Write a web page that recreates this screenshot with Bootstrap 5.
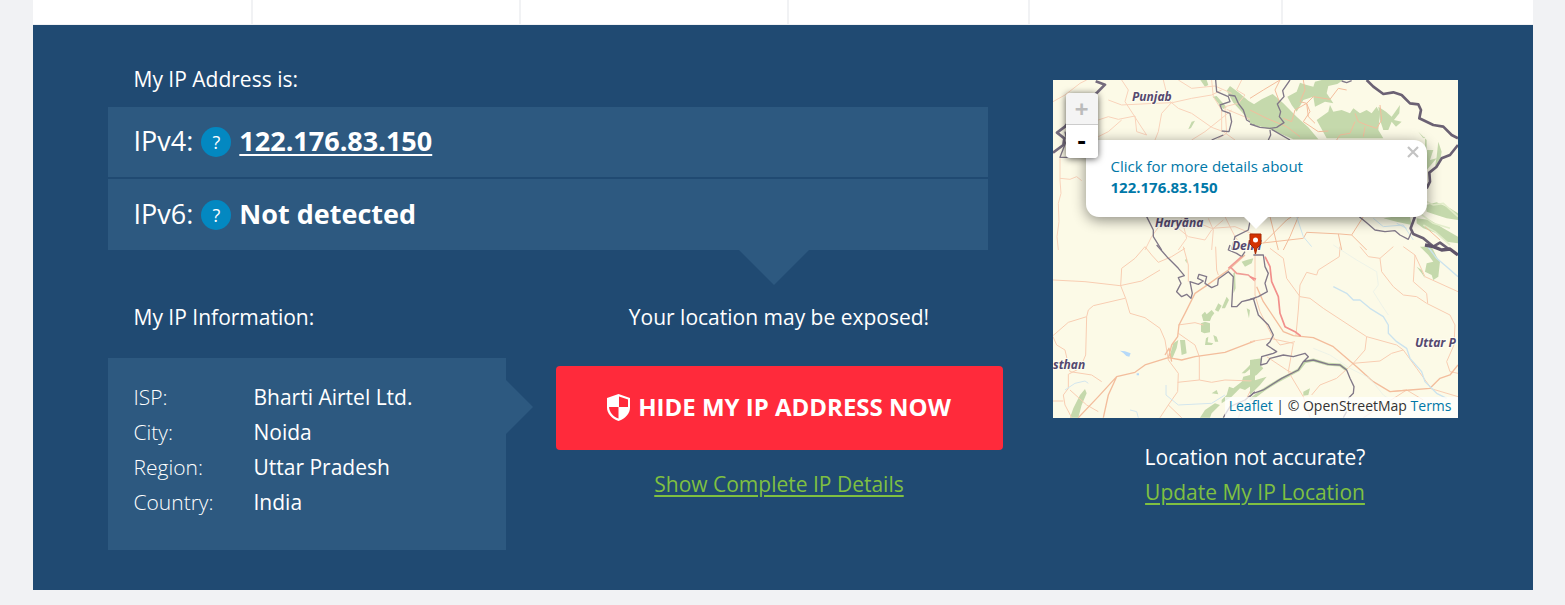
<!DOCTYPE html>
<html lang="en">
<head>
<meta charset="utf-8">
<meta name="viewport" content="width=device-width, initial-scale=1">
<title>What Is My IP Address</title>
<link rel="stylesheet" href="https://cdn.jsdelivr.net/npm/bootstrap@5.3.0/dist/css/bootstrap.min.css">
<script src="https://cdn.jsdelivr.net/npm/bootstrap@5.3.0/dist/js/bootstrap.bundle.min.js"></script>
<style>
  body { font-family: "Open Sans", sans-serif; font-size: 21px; line-height: 35px; background: #f1f2f4; }
  .page-wrap { max-width: 1500px; }
  .tab-strip { display: grid; grid-template-columns: 220fr 268fr 268fr 241fr 253fr 250fr; height: 25px; background: #fff; border-bottom: 1px solid #f1f2f4; }
  .tab-cell:not(:last-child) { border-right: 2px solid #f1f2f4; }
  .hero { background: #204a72; color: #fff; padding: 37px 5% 40px; }
  .hero-grid { display: grid; grid-template-columns: minmax(0, 895fr) minmax(0, 405fr); column-gap: 50px; }
  .box-bg { background: #2d5980; }
  .side-pad { padding-left: 26px; padding-right: 26px; }
  .ip-list { position: relative; margin: 10px 15px 0 0; }
  .ip-row { display: flex; align-items: center; min-height: 70px; padding-bottom: 3px; font-size: 27px; }
  .ip-row + .ip-row { margin-top: 2px; min-height: 71px; }
  .ip-row a { color: #fff; text-decoration-thickness: 2px; text-underline-offset: 3px; }
  .ip-list::after { content: ""; position: absolute; top: 100%; right: 179px; border: 35px solid transparent; border-bottom: 0; border-top-color: #2d5980; }
  .help-btn { width: 30px; height: 30px; margin: 3px 8px 0; padding: 0; border: 0; border-radius: 50%; background: #0388c1; color: #fff; font-size: 18px; line-height: 30px; }
  .detail-grid { display: grid; grid-template-columns: 398fr 447fr; column-gap: 50px; padding-top: 50px; }
  .info-box { position: relative; margin: 23px 0 0; padding-top: 22px; padding-bottom: 30px; }
  .info-box::after { content: ""; position: absolute; left: 100%; top: 22px; border: 27px solid transparent; border-right: 0; border-left-color: #2d5980; }
  .info-box dt { width: 120px; font-weight: 300; }
  .hide-btn { margin: 31px 0 17px; height: 84px; padding-bottom: 8px; border: 0; border-radius: 4px; background: #ff2a3b; color: #fff; font-size: 24px; font-weight: 700; }
  .hide-btn:hover { background: #e62535; color: #fff; }
  .green-link { color: #7fc041; text-decoration-thickness: 2px; text-underline-offset: 3px; }
  .map-box { position: relative; margin: 18px 0 22px; line-height: 21px; background: #fcfae7; }
  .map-box > svg { display: block; width: 100%; height: auto; }
  .map-box a { color: #0078a8; text-decoration: none; }
  .zoom-ctl { position: absolute; z-index: 2; left: 13px; top: 13px; width: 32px; border-radius: 4px; box-shadow: 0 1px 7px rgba(0,0,0,.65); }
  .zoom-ctl button { display: block; width: 100%; height: 33px; padding: 0; border: 0; border-radius: 0 0 4px 4px; background: #fff; color: #000; font: bold 22px/30px "DejaVu Sans Mono", monospace; }
  .zoom-ctl button:disabled { height: 32px; border-radius: 4px 4px 0 0; background: #f4f4f4; color: #bbb; border-bottom: 1px solid #ccc; }
  .map-popup { position: absolute; left: 33px; top: 60px; width: 341px; height: 77px; padding: 16px 25px; border-radius: 13px; background: #fff; box-shadow: 0 3px 14px rgba(0,0,0,.45); font-size: 15px; }
  .map-popup::after { content: ""; position: absolute; top: 100%; left: 50%; border: 12px solid transparent; border-bottom: 0; border-top-color: #fff; transform: translateX(-50%); }
  .popup-close { position: absolute; right: 6px; top: 4px; padding: 0; border: 0; background: none; width: 16px; height: 16px; line-height: 0; }
  .map-credit { position: absolute; right: 0; bottom: 0; height: 21px; padding: 0 6px 0 4px; line-height: 18px; background: rgba(255,255,255,.75); color: #333; font-size: 14px; }
</style>
</head>
<body>
<div class="page-wrap mx-auto">
  <div class="tab-strip">
    <div class="tab-cell"></div><div class="tab-cell"></div><div class="tab-cell"></div><div class="tab-cell"></div><div class="tab-cell"></div><div class="tab-cell"></div>
  </div>
  <main class="hero hero-grid">
    <section>
      <div class="side-pad">My IP Address is:</div>
      <div class="ip-list">
        <div class="ip-row box-bg side-pad"><span>IPv4:</span><button class="help-btn" type="button">?</button><a class="fw-bold" href="#">122.176.83.150</a></div>
        <div class="ip-row box-bg side-pad"><span>IPv6:</span><button class="help-btn" type="button">?</button><strong>Not detected</strong></div>
      </div>
      <div class="detail-grid">
        <div>
          <div class="side-pad">My IP Information:</div>
          <dl class="info-box box-bg side-pad">
            <div class="d-flex"><dt>ISP:</dt><dd class="m-0">Bharti Airtel Ltd.</dd></div>
            <div class="d-flex"><dt>City:</dt><dd class="m-0">Noida</dd></div>
            <div class="d-flex"><dt>Region:</dt><dd class="m-0">Uttar Pradesh</dd></div>
            <div class="d-flex"><dt>Country:</dt><dd class="m-0">India</dd></div>
          </dl>
        </div>
        <div class="text-center">
          <div>Your location may be exposed!</div>
          <button class="btn hide-btn w-100 d-flex align-items-center justify-content-center gap-2" type="button">
            <svg width="23" height="27" viewBox="0 0 23 27" aria-hidden="true"><path fill="#fff" d="M11.500 0 23 4v9.500c0 6-4.500 11-11.500 13.500C4.500 24.500 0 19.500 0 13.500V4z"/><path fill="#ff2a3b" d="M12 2.500 21 5.500V13h-9zM11.500 13v11.500C6 22.500 2.500 18.500 2 13z"/></svg>
            <span>HIDE MY IP ADDRESS NOW</span>
          </button>
          <a class="green-link" href="#">Show Complete IP Details</a>
        </div>
      </div>
    </section>
    <aside class="text-center">
      <div class="map-box text-start">
        <svg viewBox="0 0 405 338" role="img" aria-label="Map of northern India around Delhi">
          <rect width="405" height="338" fill="#fcfae7"/>
          <!-- north-west quarter -->
          <g transform="translate(-8 -10) scale(.3333)" fill="none" stroke-linejoin="round">
            <path fill="#c5d9ac" d="M545 62 555 48 582 68 610 92 640 110V170L612 152 590 125 565 98ZM503 80 515 78 530 95 545 112 535 117 520 100ZM466 30 485 30 490 45 480 50ZM430 178 440 155 450 152 438 174Z"/>
            <g stroke="#f9d3bb" stroke-width="3"><path d="M24 95 60 75 105 40 125 30M45 265V330L48 370 40 400 42 455 36 500 40 540M45 325 75 328 95 320 110 332M160 150 190 140 220 148 270 138 275 185 305 195 285 165 268 138 240 95 250 60 230 30M355 30 370 90 400 115 440 130 500 172 535 185 570 210M190 90 230 105 330 100 382 98 440 85 500 75 530 60M382 95 350 130 340 185 330 210M160 200 190 185 230 150M400 30 440 55 510 48 560 70M590 30 575 60 600 75 580 100 540 110 545 190 520 205M440 210 480 185 530 145 560 120M545 118 610 145 640 160M500 30 505 80 530 120 530 180"/>
            <path d="M300 540 320 500 345 465 400 475 430 500 480 510 500 480 535 450M345 470 390 450 450 455 500 475 570 470 630 495M400 540 425 505 410 445M500 540 505 480 490 445M540 440 570 500 600 540"/></g>
            <g stroke="#817888" stroke-width="4"><path d="M512 30 515 65 550 80 555 95 525 105 532 122 555 130 560 155 552 185 530 183M535 195 500 210M550 75 570 78 580 100 595 120 605 150 630 165M305 440 325 480 325 500 350 540M560 540 570 500 610 480 615 455M60 185 65 210 45 262 125 262"/></g>
            <path stroke="#746b7d" stroke-width="8" d="M24 248 55 225 58 205 36 188 60 170 100 120 158 66 180 44 152 34"/>
          </g>
          <!-- north-east quarter -->
          <g transform="translate(197 -10) scale(.3333)" fill="none" stroke-linejoin="round">
            <g fill="#c5d9ac"><path d="M0 110 35 88 68 72 100 100 140 140 175 172 205 208H130L70 182 0 160Z"/><path d="M200 150 235 125 240 105 250 125 275 120 300 130 310 115 330 130 350 120 365 130 380 110 390 130 385 180 400 205H230Z"/><path d="M112 80 140 65 150 38 170 45 190 50 195 35 215 30H280L262 42 235 48 230 70 250 100 225 95 195 110 190 80 160 90 140 125 125 105Z"/><path d="M385 110 408 125 425 140 450 105 448 130 432 150 455 155 438 170 425 155 415 180 400 180 390 150ZM505 185 520 205 525 200 525 240 550 240 540 270 560 265 530 300V210ZM565 215 575 245 570 275 555 290 560 260ZM528 405 560 397 600 415 624 430V450L590 445 550 432 530 425ZM400 445 430 440H480L485 465 440 455ZM500 445 540 450 580 475 624 500V520L590 515 560 490 520 475 500 460Z"/></g>
            <path stroke="#e3edca" stroke-width="5" d="M520 390 550 405 580 400 624 440M510 430 550 460 600 475M520 465 555 485 600 525"/>
            <g stroke="#f3bd9c" stroke-width="3"><path d="M100 145 125 155 135 120 170 100 180 125 160 155 205 185 235 183M160 30 165 60 150 95 170 100 190 80 240 88 265 55 290 60M170 100 175 140 195 160M315 130 325 155 350 165 380 175 395 150 390 105M260 210 270 195 300 190 315 155M345 170 340 200M0 85 40 60 90 30M0 120 50 145 110 170 150 200M90 30 75 60 90 100"/>
            <path d="M40 520 110 450 125 440M30 520 160 505 170 487 270 492 305 495 340 440M305 495 350 540M60 440 85 540M100 540 120 500 145 440M265 492 275 540M525 470 570 510"/></g>
            <path stroke="#cfe6ee" stroke-width="3" d="M140 440 160 500 185 530M370 445 400 470 460 465 490 510M440 460 470 475"/>
            <path stroke="#817888" stroke-width="4" d="M120 30 98 62 102 80 82 102 92 125 88 140 102 158 80 172 60 175 30 172 0 162M60 180 62 195 55 210M65 178 120 210M275 33 290 38 305 32M328 440 350 458 375 480 405 485 435 482 450 495 475 508 485 485"/>
            <path stroke="#6b6173" stroke-width="8" d="M350 30 370 50 400 72 430 67 455 75 480 100 505 103 513 120 508 145 550 165 580 170 605 195 624 205M624 225 600 255 575 265 560 290 538 308 540 335 530 355M495 440 482 475 490 492 520 505 550 530 570 518 600 540"/>
          </g>
          <!-- south-west quarter -->
          <g transform="translate(-8 165) scale(.3333)" fill="none" stroke-linejoin="round">
            <g fill="#c5d9ac"><path d="M75 518 85 490 105 450 120 432 125 445 110 480 100 518ZM375 330 385 295 400 285 395 310 380 345ZM405 285 420 285 425 325 410 330ZM468 235 480 230 495 235 495 262 478 265 468 260ZM475 228 470 210 480 200 485 208 500 195 508 205 500 215 495 228ZM510 195 520 175 530 182 520 200ZM530 190 545 155 552 165 540 190ZM480 300 483 280 490 275 488 292 505 295 500 300ZM510 290 505 270 515 275 520 290ZM465 518 480 495 510 475 525 480 500 505 495 518ZM530 465 545 450 552 425 565 430 590 410 595 395 615 390 630 375V415L600 435 585 430 560 455 530 475ZM590 385 610 365 630 343V360L600 385ZM500 445 515 435 520 448ZM565 85 570 80 572 130 566 145ZM590 50 605 45 625 40 620 55 600 65ZM605 190 615 195 612 220ZM420 45 426 40 425 55Z"/></g>
            <g stroke="#f8cdb2" stroke-width="3"><path d="M24 105 120 110 225 122 290 108 345 75M300 5 270 40 230 70 227 122 242 160 255 205 300 218 345 250 360 285 370 345 400 385 398 440 370 480 345 518M24 272 70 232 125 215 130 195 145 182 240 160M125 215 122 330 105 370 70 388 70 430 55 450 60 480 80 518M24 275 35 300 60 315 75 380 140 390 170 410M24 468 55 468M75 435 125 480 160 500M300 5 320 30 340 52 380 35 420 10M415 5 430 60 430 110M512 5 515 75 520 90M400 240 450 233 475 240M400 265 450 300 463 335V405L500 412 540 405 620 408M463 405 398 412M370 480 410 518M580 518 600 470 620 430"/></g>
            <path stroke="#f3bd9c" stroke-width="4" d="M100 518 160 455 215 395 270 382 300 360 370 338 410 345 450 335 540 322 630 288M215 395 190 450 175 518M370 340 380 300 398 275 402 240 420 205 450 145 480 125 550 75 600 30M360 330 372 310 380 350"/>
            <path stroke="#d3e6ee" stroke-width="3" d="M60 435 90 415 120 408 130 415M255 495 275 500 280 518M363 420V450L400 480 500 475 540 450"/>
            <path fill="#b6d9f8" d="M225 317 240 319 257 325 253 335 244 333 235 324ZM275 385H282V391H275Z"/>
            <path stroke="#817888" stroke-width="4" d="M335 0 370 40 400 70 418 92 400 98 408 115 395 140 410 155 425 148 438 160 442 145 435 110 460 118 475 108 458 100 462 88 485 95 480 115 500 128 518 120 520 102 550 80 565 95 560 185 575 185 590 170 610 165 630 160M555 0 550 15 575 25 590 35 600 20M535 518 555 485 600 465 630 440"/>
            <path stroke="#f09c95" stroke-width="5" d="M550 70 590 35M555 65 575 85 610 90 630 108"/>
          </g>
          <!-- south-east quarter -->
          <g transform="translate(197 165) scale(.3333)" fill="none" stroke-linejoin="round">
            <path fill="#c5d9ac" d="M0 345 35 340 30 360 40 370 20 390 0 400ZM0 410 50 395 30 420 0 450ZM510 5H545L560 35 570 50 565 95 550 105 545 90 525 80 530 55 550 50 535 30ZM500 65 515 75 525 100 515 85ZM160 440 180 430 175 450 160 452Z"/>
            <path stroke="#c5d9ac" stroke-width="9" d="M0 465 40 435 80 410 145 375 165 350 190 345 235 358 270 360 290 375"/>
            <g stroke="#f8cdb2" stroke-width="3"><path d="M60 10 100 40 110 100 150 155 180 160 220 190 350 275 440 300 460 315M270 5 268 35 205 75 200 90 170 82 150 120 145 195 138 270M330 5 355 35 390 40 430 5M390 40 395 80 430 125 460 150 500 155 530 175 600 210 615 240 612 300 590 350 600 380M460 5 495 30 525 95 624 140M495 30 490 110 530 145 533 175M350 275 345 315 310 355 390 348 425 325 460 315 500 370 540 425M0 290 60 280 130 295 115 380 160 455 180 518M135 290 90 300 65 270 30 200 15 150V0M50 335 110 375 130 385M310 355 260 400 210 420 185 450M420 440 470 435 400 480 340 518M600 380 624 385M470 435 520 465M540 430 624 455"/></g>
            <path stroke="#f3bd9c" stroke-width="4" d="M20 125 40 170 100 260 130 272 190 278 250 305 320 365 370 410 420 440 480 435 540 430 570 400 600 390 624 360"/>
            <path stroke="#cbe3ee" stroke-width="4" d="M250 125 290 145 310 165 330 165 360 190 400 215 415 240 415 265 440 290 470 310 480 340 515 380 525 410 560 445 590 460M530 0 560 40 590 65 624 95"/>
            <path stroke="#e5eee9" stroke-width="2" d="M250 0 320 45 380 80 385 120 370 140 395 180 415 210M190 310 240 330 300 370 360 400 400 450 460 490"/>
            <path stroke="#817888" stroke-width="4" d="M10 30 40 30 45 65 55 85 45 115 52 140 25 155 0 163M10 160 25 210 55 240 70 270 60 290 50 300 80 320 70 325 35 335 32 360 50 355 60 340 100 330 130 335 165 325 175 335 160 350 145 375 95 400 40 435 10 445 0 455M160 350 190 345 235 358 270 360 290 375 300 400 312 425 310 445 295 460M290 500 280 518"/>
            <path stroke="#5f5469" stroke-width="10" d="M525 0 550 5 575 15 600 12 624 30"/>
            <path stroke="#f28f8b" stroke-width="5" d="M45 35 60 65 65 110 85 155 90 205 105 245 135 260 152 273M0 95 18 103"/>
          </g>
          <g font-family="Noto Sans, sans-serif" font-size="12" font-weight="700" font-style="italic" fill="#55496f" stroke="#fffdf0" stroke-width="2" paint-order="stroke">
            <text x="79" y="21">Punjab</text><text x="102" y="147">Haryāna</text><text x="179" y="170">Delhi</text><text x="362" y="267">Uttar P</text><text x="0" y="289">sthan</text>
          </g>
          <path d="M197 154h11v10l-4 4-1.500 6-1.500-6-4-4z" fill="#d43200" stroke="#a62a04"/><circle cx="202.500" cy="160" r="2.500" fill="#fff"/>
        </svg>
        <div class="map-popup"><a href="#">Click for more details about<br><strong>122.176.83.150</strong></a>
          <button class="popup-close" type="button" aria-label="Close popup"><svg width="16" height="16" viewBox="0 0 16 16"><path d="m3 3 10 10M13 3 3 13" stroke="#c3c3c3" stroke-width="2.200"/></svg></button>
        </div>
        <div class="zoom-ctl"><button type="button" disabled>+</button><button type="button">-</button></div>
        <div class="map-credit text-nowrap"><a href="#">Leaflet</a> | © OpenStreetMap <a href="#">Terms</a></div>
      </div>
      <div>Location not accurate?</div>
      <a class="green-link" href="#">Update My IP Location</a>
    </aside>
  </main>
</div>
</body>
</html>
